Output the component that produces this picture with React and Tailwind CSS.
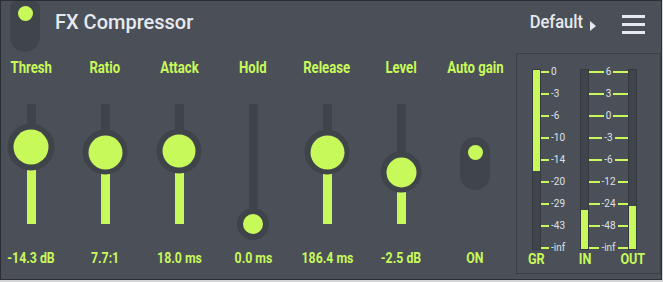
const sliders = [
  { label: 'Thresh', value: '-14.3 dB', pos: 43, ring: 47, dot: 35 },
  { label: 'Ratio', value: '7.7:1', pos: 48, ring: 45, dot: 34 },
  { label: 'Attack', value: '18.0 ms', pos: 47, ring: 45, dot: 33 },
  { label: 'Hold', value: '0.0 ms', pos: 120, ring: 32, dot: 20 },
  { label: 'Release', value: '186.4 ms', pos: 48, ring: 45, dot: 34 },
  { label: 'Level', value: '-2.5 dB', pos: 68, ring: 41, dot: 30 },
];

const grScale = ['0', '-3', '-6', '-10', '-14', '-20', '-29', '-43', '-inf'];
const ioScale = ['6', '3', '0', '-3', '-6', '-12', '-24', '-48', '-inf'];

function Column({ label, value, children }) {
  return (
    <div className="flex flex-col items-center">
      <div className="mt-[6px] h-[18px] text-[16px] leading-[18px] font-bold text-[#c8f95b] whitespace-nowrap scale-x-82">
        {label}
      </div>
      <div className="mt-[27px] h-[120px] w-[60px] relative flex justify-center">{children}</div>
      <div className="mt-[26px] h-[16px] text-[14px] leading-[16px] font-bold text-[#c8f95b] whitespace-nowrap scale-x-88">
        {value}
      </div>
    </div>
  );
}

function Slider({ pos, ring, dot }) {
  return (
    <>
      <div className="w-[9px] h-full bg-[#3f444b] flex flex-col justify-end">
        <div className="bg-[#c8f95b]" style={{ height: 120 - pos }} />
      </div>
      <div
        className="absolute left-1/2 -translate-x-1/2 -translate-y-1/2 rounded-full bg-[#3f444b] flex items-center justify-center"
        style={{ top: pos, width: ring, height: ring }}
      >
        <div className="rounded-full bg-[#c8f95b]" style={{ width: dot, height: dot }} />
      </div>
    </>
  );
}

function Meter({ label, top = 0, bottom = 0 }) {
  return (
    <div className="w-[9px] flex flex-col items-center">
      <div className="w-[9px] h-[181px] border border-[#363a40] bg-[#40454c] flex flex-col justify-between">
        <div className="bg-[#c8f95b]" style={{ height: top }} />
        <div className="bg-[#c8f95b]" style={{ height: bottom }} />
      </div>
      <div className="mt-[1px] text-[14px] leading-[16px] font-bold text-[#c8f95b] whitespace-nowrap scale-x-90">
        {label}
      </div>
    </div>
  );
}

function GrScale() {
  return (
    <div className="w-[39px] h-[182px] flex flex-col justify-between">
      {grScale.map((v) => (
        <div key={v} className="h-[6px] flex items-center">
          <div className="w-[8px] h-[2px] bg-[#c8f95b]" />
          <span className="ml-[2px] text-[10px] leading-none text-[#dde1e7]">{v}</span>
        </div>
      ))}
    </div>
  );
}

function IoScale() {
  return (
    <div className="w-[39px] h-[182px] flex flex-col justify-between">
      {ioScale.map((v) => (
        <div key={v} className="h-[6px] flex items-center">
          <div className="flex-1 h-[2px] bg-[#c8f95b]" />
          <span className="px-[2px] text-[10px] leading-none text-[#dde1e7]">{v}</span>
          <div className="flex-1 h-[2px] bg-[#c8f95b]" />
        </div>
      ))}
    </div>
  );
}

export default function App() {
  return (
    <div className="w-[663px] h-[282px] bg-[#d4d5d7] font-['Roboto',sans-serif]">
      <div className="w-[662px] h-[280px] border border-[#2b2f34] bg-[#4b5058] flex flex-col">
        {/* header */}
        <div className="h-[52px] flex items-start">
          <div className="ml-[9px] w-[30px] h-[51px] rounded-t-[6px] rounded-b-[15px] bg-[#40454c] flex justify-center pt-[5px]">
            <div className="w-[15px] h-[15px] rounded-full bg-[#c8f95b]" />
          </div>
          <div className="ml-[15px] mt-[9px] text-[20px] leading-[24px] font-medium text-[#e6e9ef]">FX Compressor</div>
          <div className="ml-auto flex items-start">
            <div className="mt-[10px] text-[18px] leading-[22px] font-medium text-[#e6e9ef] scale-x-92 origin-right">
              Default
            </div>
            <svg className="ml-[7px] mt-[20px]" width="6" height="10" viewBox="0 0 6 10">
              <path d="M0 0 L6 5 L0 10 Z" fill="#e6e9ef" />
            </svg>
            <div className="ml-[26px] mr-[16px] mt-[14px] flex flex-col gap-[5px]">
              <div className="w-[23px] h-[3px] bg-[#e6e9ef]" />
              <div className="w-[23px] h-[3px] bg-[#e6e9ef]" />
              <div className="w-[23px] h-[3px] bg-[#e6e9ef]" />
            </div>
          </div>
        </div>

        {/* body */}
        <div className="flex flex-1">
          <div className="flex-1">
            <div className="-ml-[7px] w-[518px] grid grid-cols-7">
              {sliders.map((s) => (
                <Column key={s.label} label={s.label} value={s.value}>
                  <Slider pos={s.pos} ring={s.ring} dot={s.dot} />
                </Column>
              ))}
              <Column label="Auto gain" value="ON">
                <div className="mt-[33px] w-[30px] h-[53px] rounded-full bg-[#40454c] flex justify-center pt-[8px]">
                  <div className="w-[15px] h-[15px] rounded-full bg-[#c8f95b]" />
                </div>
              </Column>
            </div>
          </div>

          <div className="w-[145px] h-[221px] border border-[#3a3f45] flex items-start pt-[15px] pl-[15px]">
            <Meter label="GR" top={101} />
            <GrScale />
            <Meter label="IN" bottom={39} />
            <IoScale />
            <Meter label="OUT" bottom={43} />
          </div>
        </div>
      </div>
    </div>
  );
}
